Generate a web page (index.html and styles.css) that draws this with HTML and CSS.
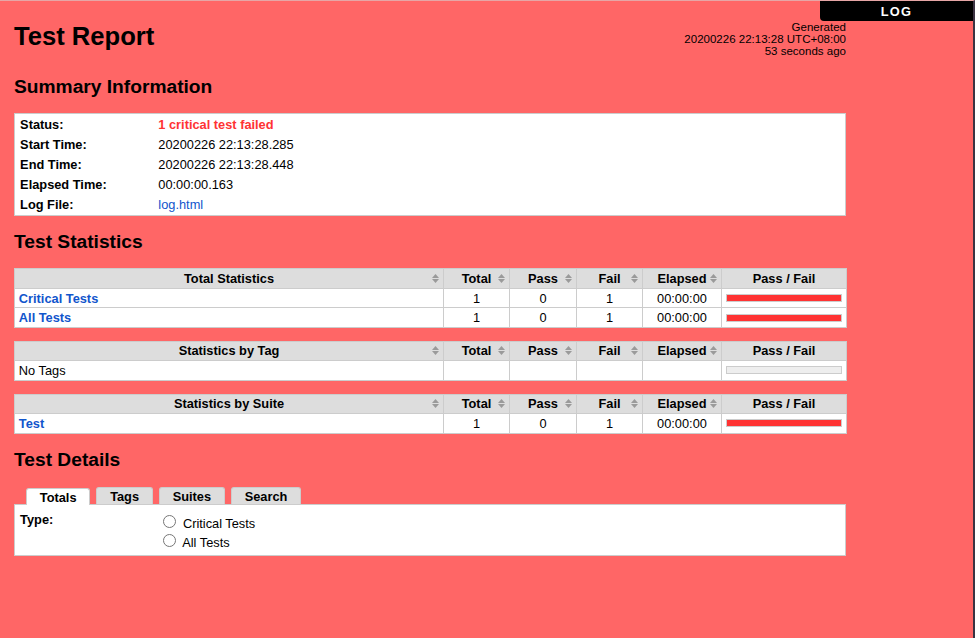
FILE: index.html
```html
<!DOCTYPE html>
<html>
<head>
<meta charset="utf-8">
<title>Test Report</title>
<link rel="stylesheet" href="styles.css">
</head>
<body>
<div class="page">
  <div class="top-right"><a class="log-link" href="#">LOG</a></div>
  <div class="main">
    <div class="header">
      <h1>Test Report</h1>
      <div class="generated">Generated<br>20200226 22:13:28 UTC+08:00<br>53 seconds ago</div>
    </div>

    <h2>Summary Information</h2>
    <table class="details">
      <tr><th>Status:</th><td><span class="fail">1 critical test failed</span></td></tr>
      <tr><th>Start Time:</th><td>20200226 22:13:28.285</td></tr>
      <tr><th>End Time:</th><td>20200226 22:13:28.448</td></tr>
      <tr><th>Elapsed Time:</th><td>00:00:00.163</td></tr>
      <tr><th>Log File:</th><td><a href="#">log.html</a></td></tr>
    </table>

    <h2>Test Statistics</h2>
    <table class="statistics">
      <colgroup><col class="c-name"><col class="c-total"><col class="c-pass"><col class="c-fail"><col class="c-elapsed"><col class="c-graph"></colgroup>
      <tr>
        <th><div class="th-in"><span></span><span>Total Statistics</span><svg class="sort" viewBox="0 0 7 9"><path d="M0 4 L3.5 0 L7 4Z"/><path d="M0 5 L7 5 L3.5 9Z"/></svg></div></th>
        <th><div class="th-in"><span></span><span>Total</span><svg class="sort" viewBox="0 0 7 9"><path d="M0 4 L3.5 0 L7 4Z"/><path d="M0 5 L7 5 L3.5 9Z"/></svg></div></th>
        <th><div class="th-in"><span></span><span>Pass</span><svg class="sort" viewBox="0 0 7 9"><path d="M0 4 L3.5 0 L7 4Z"/><path d="M0 5 L7 5 L3.5 9Z"/></svg></div></th>
        <th><div class="th-in"><span></span><span>Fail</span><svg class="sort" viewBox="0 0 7 9"><path d="M0 4 L3.5 0 L7 4Z"/><path d="M0 5 L7 5 L3.5 9Z"/></svg></div></th>
        <th><div class="th-in"><span></span><span>Elapsed</span><svg class="sort" viewBox="0 0 7 9"><path d="M0 4 L3.5 0 L7 4Z"/><path d="M0 5 L7 5 L3.5 9Z"/></svg></div></th>
        <th>Pass / Fail</th>
      </tr>
      <tr><td class="name"><a href="#">Critical Tests</a></td><td>1</td><td>0</td><td>1</td><td>00:00:00</td><td class="graph-cell"><div class="graph fail-bar"></div></td></tr>
      <tr><td class="name"><a href="#">All Tests</a></td><td>1</td><td>0</td><td>1</td><td>00:00:00</td><td class="graph-cell"><div class="graph fail-bar"></div></td></tr>
    </table>

    <table class="statistics">
      <colgroup><col class="c-name"><col class="c-total"><col class="c-pass"><col class="c-fail"><col class="c-elapsed"><col class="c-graph"></colgroup>
      <tr>
        <th><div class="th-in"><span></span><span>Statistics by Tag</span><svg class="sort" viewBox="0 0 7 9"><path d="M0 4 L3.5 0 L7 4Z"/><path d="M0 5 L7 5 L3.5 9Z"/></svg></div></th>
        <th><div class="th-in"><span></span><span>Total</span><svg class="sort" viewBox="0 0 7 9"><path d="M0 4 L3.5 0 L7 4Z"/><path d="M0 5 L7 5 L3.5 9Z"/></svg></div></th>
        <th><div class="th-in"><span></span><span>Pass</span><svg class="sort" viewBox="0 0 7 9"><path d="M0 4 L3.5 0 L7 4Z"/><path d="M0 5 L7 5 L3.5 9Z"/></svg></div></th>
        <th><div class="th-in"><span></span><span>Fail</span><svg class="sort" viewBox="0 0 7 9"><path d="M0 4 L3.5 0 L7 4Z"/><path d="M0 5 L7 5 L3.5 9Z"/></svg></div></th>
        <th><div class="th-in"><span></span><span>Elapsed</span><svg class="sort" viewBox="0 0 7 9"><path d="M0 4 L3.5 0 L7 4Z"/><path d="M0 5 L7 5 L3.5 9Z"/></svg></div></th>
        <th>Pass / Fail</th>
      </tr>
      <tr><td class="name plain">No Tags</td><td></td><td></td><td></td><td></td><td class="graph-cell"><div class="graph empty-bar"></div></td></tr>
    </table>

    <table class="statistics">
      <colgroup><col class="c-name"><col class="c-total"><col class="c-pass"><col class="c-fail"><col class="c-elapsed"><col class="c-graph"></colgroup>
      <tr>
        <th><div class="th-in"><span></span><span>Statistics by Suite</span><svg class="sort" viewBox="0 0 7 9"><path d="M0 4 L3.5 0 L7 4Z"/><path d="M0 5 L7 5 L3.5 9Z"/></svg></div></th>
        <th><div class="th-in"><span></span><span>Total</span><svg class="sort" viewBox="0 0 7 9"><path d="M0 4 L3.5 0 L7 4Z"/><path d="M0 5 L7 5 L3.5 9Z"/></svg></div></th>
        <th><div class="th-in"><span></span><span>Pass</span><svg class="sort" viewBox="0 0 7 9"><path d="M0 4 L3.5 0 L7 4Z"/><path d="M0 5 L7 5 L3.5 9Z"/></svg></div></th>
        <th><div class="th-in"><span></span><span>Fail</span><svg class="sort" viewBox="0 0 7 9"><path d="M0 4 L3.5 0 L7 4Z"/><path d="M0 5 L7 5 L3.5 9Z"/></svg></div></th>
        <th><div class="th-in"><span></span><span>Elapsed</span><svg class="sort" viewBox="0 0 7 9"><path d="M0 4 L3.5 0 L7 4Z"/><path d="M0 5 L7 5 L3.5 9Z"/></svg></div></th>
        <th>Pass / Fail</th>
      </tr>
      <tr><td class="name"><a href="#">Test</a></td><td>1</td><td>0</td><td>1</td><td>00:00:00</td><td class="graph-cell"><div class="graph fail-bar"></div></td></tr>
    </table>

    <h2>Test Details</h2>
    <ul class="tabs">
      <li class="tab active">Totals</li>
      <li class="tab">Tags</li>
      <li class="tab">Suites</li>
      <li class="tab">Search</li>
    </ul>
    <table class="details totals">
      <tr>
        <th>Type:</th>
        <td>
          <input type="radio" name="type" id="t1"> <label for="t1">Critical Tests</label><br>
          <input type="radio" name="type" id="t2"> <label for="t2">All Tests</label>
        </td>
      </tr>
    </table>
  </div>
</div>
</body>
</html>
```

FILE: styles.css
```css
html, body {
  margin: 0;
  padding: 0;
  background: #f66;
}

.page {
  position: relative;
  min-height: 100vh;
  box-sizing: border-box;
  border-top: 1px solid #e6a6a6;
  border-right: 2px solid #3c3342;
  font-family: "Liberation Sans", Arial, sans-serif;
  font-size: 12.8px;
  color: #000;
}

.main {
  padding: 15px 0 0 14px;
}

.top-right {
  position: absolute;
  top: 0;
  right: 0;
  width: 153px;
  text-align: center;
}

.log-link {
  display: block;
  background: #000;
  color: #fff;
  text-decoration: none;
  font-weight: bold;
  letter-spacing: 0.1em;
  padding: 3px 0 2px;
  border-bottom-left-radius: 4px;
}

.header {
  display: flex;
  justify-content: space-between;
  align-items: flex-start;
  width: 832px;
  height: 38.4px;
  margin: 6px 0 0;
}

h1 {
  margin: 0;
  font-size: 25.6px;
  font-weight: bold;
}

.generated {
  font-size: 11.52px;
  text-align: right;
  margin-top: -1px;
}

h2 {
  font-size: 19.2px;
  font-weight: bold;
  margin: 15.4px 0;
}

a {
  color: #15c;
  text-decoration: none;
}

.fail {
  color: #f33;
  font-weight: bold;
}

.details {
  width: 832px;
  border-collapse: collapse;
  background: #fff;
  border: 1px solid #ccc;
}

.details th {
  text-align: left;
  vertical-align: top;
  width: 128px;
  padding: 2.56px 5.12px;
  font-weight: bold;
}

.details td {
  padding: 2.56px 5.12px;
}

.statistics {
  width: 832px;
  table-layout: fixed;
  border-collapse: collapse;
  margin-bottom: 12.8px;
  background: #fff;
}

.c-name { width: 429px; }
.c-total { width: 66px; }
.c-pass { width: 67px; }
.c-fail { width: 66px; }
.c-elapsed { width: 79px; }
.c-graph { width: 125px; }

.statistics th,
.statistics td {
  border: 1px solid #ccc;
  padding: 1.75px 3.84px;
}

.statistics th {
  background: #ddd;
  font-weight: bold;
  text-align: center;
}

.statistics td {
  text-align: center;
}

.statistics td.name {
  text-align: left;
  font-weight: bold;
}

.statistics td.plain {
  font-weight: normal;
}

.th-in {
  display: grid;
  grid-template-columns: 7px 1fr 7px;
  align-items: center;
}

.sort {
  width: 7px;
  height: 9px;
  fill: #9a9a9a;
}

.statistics td.graph-cell {
  padding: 1.75px 4px;
}

.graph {
  height: 6px;
  border: 1px solid #ccc;
}

.fail-bar {
  background: #f33;
}

.empty-bar {
  background: #eee;
}

.tabs {
  display: flex;
  align-items: flex-end;
  gap: 6px;
  list-style: none;
  margin: 0;
  padding: 1px 0 0 12px;
}

.tab {
  padding: 1px 12.8px 0;
  border: 1px solid #ccc;
  border-bottom: none;
  border-radius: 3px 3px 0 0;
  background: #ddd;
  font-weight: bold;
}

.tab.active {
  background: #fff;
  margin-bottom: -1px;
  position: relative;
}

.details.totals th,
.details.totals td {
  padding: 6.5px 5.12px 5.5px;
}

.details.totals input {
  margin: 3px 3px 0 5px;
  vertical-align: baseline;
}
```
